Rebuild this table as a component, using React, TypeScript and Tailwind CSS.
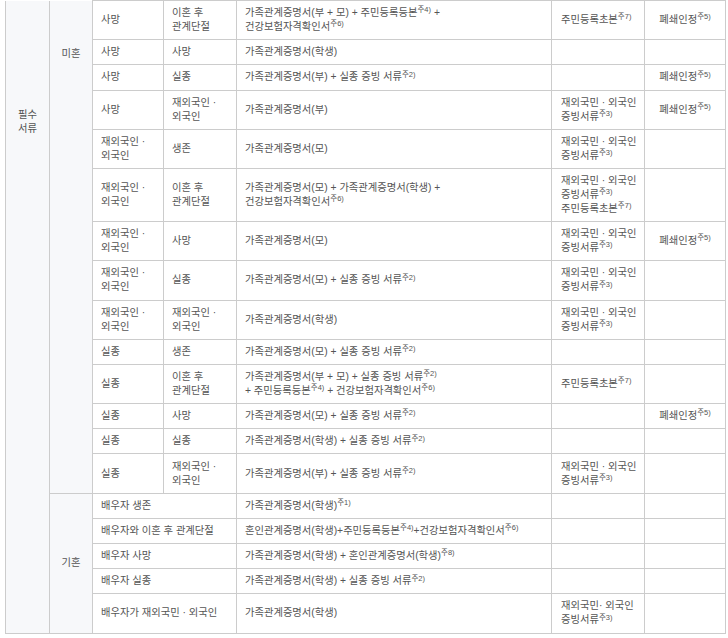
import type { ReactNode } from "react";

const Note = ({ n }: { n: number }) => (
  <sup className="text-[7.5px]">주{n})</sup>
);

const FOREIGN = (
  <>
    재외국인 ·<br />
    외국인
  </>
);

const DIVORCED = (
  <>
    이혼 후<br />
    관계단절
  </>
);

const FOREIGN_DOC = (
  <>
    재외국민 · 외국인
    <br />
    증빙서류
    <Note n={3} />
  </>
);

const CLOSED = (
  <>
    폐쇄인정
    <Note n={5} />
  </>
);

interface Row {
  parent?: ReactNode;
  other?: ReactNode;
  spouse?: ReactNode;
  docs: ReactNode;
  extra?: ReactNode;
  closed?: boolean;
}

const rows: Row[] = [
  {
    parent: "사망",
    other: DIVORCED,
    docs: (
      <>
        가족관계증명서(부 + 모) + 주민등록등본<Note n={4} /> +
        <br />
        건강보험자격확인서
        <Note n={6} />
      </>
    ),
    extra: (
      <>
        주민등록초본
        <Note n={7} />
      </>
    ),
    closed: true,
  },
  { parent: "사망", other: "사망", docs: "가족관계증명서(학생)" },
  {
    parent: "사망",
    other: "실종",
    docs: (
      <>
        가족관계증명서(부) + 실종 증빙 서류
        <Note n={2} />
      </>
    ),
    closed: true,
  },
  {
    parent: "사망",
    other: FOREIGN,
    docs: "가족관계증명서(부)",
    extra: FOREIGN_DOC,
    closed: true,
  },
  { parent: FOREIGN, other: "생존", docs: "가족관계증명서(모)", extra: FOREIGN_DOC },
  {
    parent: FOREIGN,
    other: DIVORCED,
    docs: (
      <>
        가족관계증명서(모) + 가족관계증명서(학생) +
        <br />
        건강보험자격확인서
        <Note n={6} />
      </>
    ),
    extra: (
      <>
        {FOREIGN_DOC}
        <br />
        주민등록초본
        <Note n={7} />
      </>
    ),
  },
  {
    parent: FOREIGN,
    other: "사망",
    docs: "가족관계증명서(모)",
    extra: FOREIGN_DOC,
    closed: true,
  },
  {
    parent: FOREIGN,
    other: "실종",
    docs: (
      <>
        가족관계증명서(모) + 실종 증빙 서류
        <Note n={2} />
      </>
    ),
    extra: FOREIGN_DOC,
  },
  { parent: FOREIGN, other: FOREIGN, docs: "가족관계증명서(학생)", extra: FOREIGN_DOC },
  {
    parent: "실종",
    other: "생존",
    docs: (
      <>
        가족관계증명서(모) + 실종 증빙 서류
        <Note n={2} />
      </>
    ),
  },
  {
    parent: "실종",
    other: DIVORCED,
    docs: (
      <>
        가족관계증명서(부 + 모) + 실종 증빙 서류
        <Note n={2} />
        <br />+ 주민등록등본
        <Note n={4} /> + 건강보험자격확인서
        <Note n={6} />
      </>
    ),
    extra: (
      <>
        주민등록초본
        <Note n={7} />
      </>
    ),
  },
  {
    parent: "실종",
    other: "사망",
    docs: (
      <>
        가족관계증명서(모) + 실종 증빙 서류
        <Note n={2} />
      </>
    ),
    closed: true,
  },
  {
    parent: "실종",
    other: "실종",
    docs: (
      <>
        가족관계증명서(학생) + 실종 증빙 서류
        <Note n={2} />
      </>
    ),
  },
  {
    parent: "실종",
    other: FOREIGN,
    docs: (
      <>
        가족관계증명서(부) + 실종 증빙 서류
        <Note n={2} />
      </>
    ),
    extra: FOREIGN_DOC,
  },
  {
    spouse: "배우자 생존",
    docs: (
      <>
        가족관계증명서(학생)
        <Note n={1} />
      </>
    ),
  },
  {
    spouse: "배우자와 이혼 후 관계단절",
    docs: (
      <>
        혼인관계증명서(학생)+주민등록등본
        <Note n={4} />
        +건강보험자격확인서
        <Note n={6} />
      </>
    ),
  },
  {
    spouse: "배우자 사망",
    docs: (
      <>
        가족관계증명서(학생) + 혼인관계증명서(학생)
        <Note n={8} />
      </>
    ),
  },
  {
    spouse: "배우자 실종",
    docs: (
      <>
        가족관계증명서(학생) + 실종 증빙 서류
        <Note n={2} />
      </>
    ),
  },
  {
    spouse: "배우자가 재외국민 · 외국인",
    docs: "가족관계증명서(학생)",
    extra: (
      <>
        재외국민· 외국인
        <br />
        증빙서류
        <Note n={3} />
      </>
    ),
  },
];

const td = "border border-[#cccccc] px-[8px] py-[5.1px] align-middle whitespace-nowrap";
const head = "border border-[#cccccc] bg-[#f7f8fa] text-center";

export default function App() {
  return (
    <div className="min-h-screen bg-white font-['Liberation_Sans','Noto_Sans_CJK_KR',sans-serif] text-[10.3px] leading-[14px] text-[#555555]">
      <table className="ml-[5px] w-[720px] table-fixed border-collapse">
        <colgroup>
          <col className="w-[44px]" />
          <col className="w-[43px]" />
          <col className="w-[71px]" />
          <col className="w-[73px]" />
          <col className="w-[315px]" />
          <col className="w-[93px]" />
          <col className="w-[81px]" />
        </colgroup>
        <tbody>
          {rows.map((row, i) => (
            <tr key={i}>
              {i === 0 && (
                <td rowSpan={19} className={`${head} border-t-0 align-top pt-[107px]`}>
                  필수
                  <br />
                  서류
                </td>
              )}
              {i === 0 && (
                <td rowSpan={14} className={`${head} border-t-0 align-top pt-[46px]`}>
                  미혼
                </td>
              )}
              {i === 14 && (
                <td rowSpan={5} className={`${head} align-middle`}>
                  기혼
                </td>
              )}
              {row.spouse ? (
                <td colSpan={2} className={td}>
                  {row.spouse}
                </td>
              ) : (
                <>
                  <td className={td}>{row.parent}</td>
                  <td className={td}>{row.other}</td>
                </>
              )}
              <td className={td}>{row.docs}</td>
              <td className={`${td} pl-[9px] pr-[2px]`}>{row.extra}</td>
              <td className={`${td} text-center`}>{row.closed ? CLOSED : null}</td>
            </tr>
          ))}
        </tbody>
      </table>
    </div>
  );
}
